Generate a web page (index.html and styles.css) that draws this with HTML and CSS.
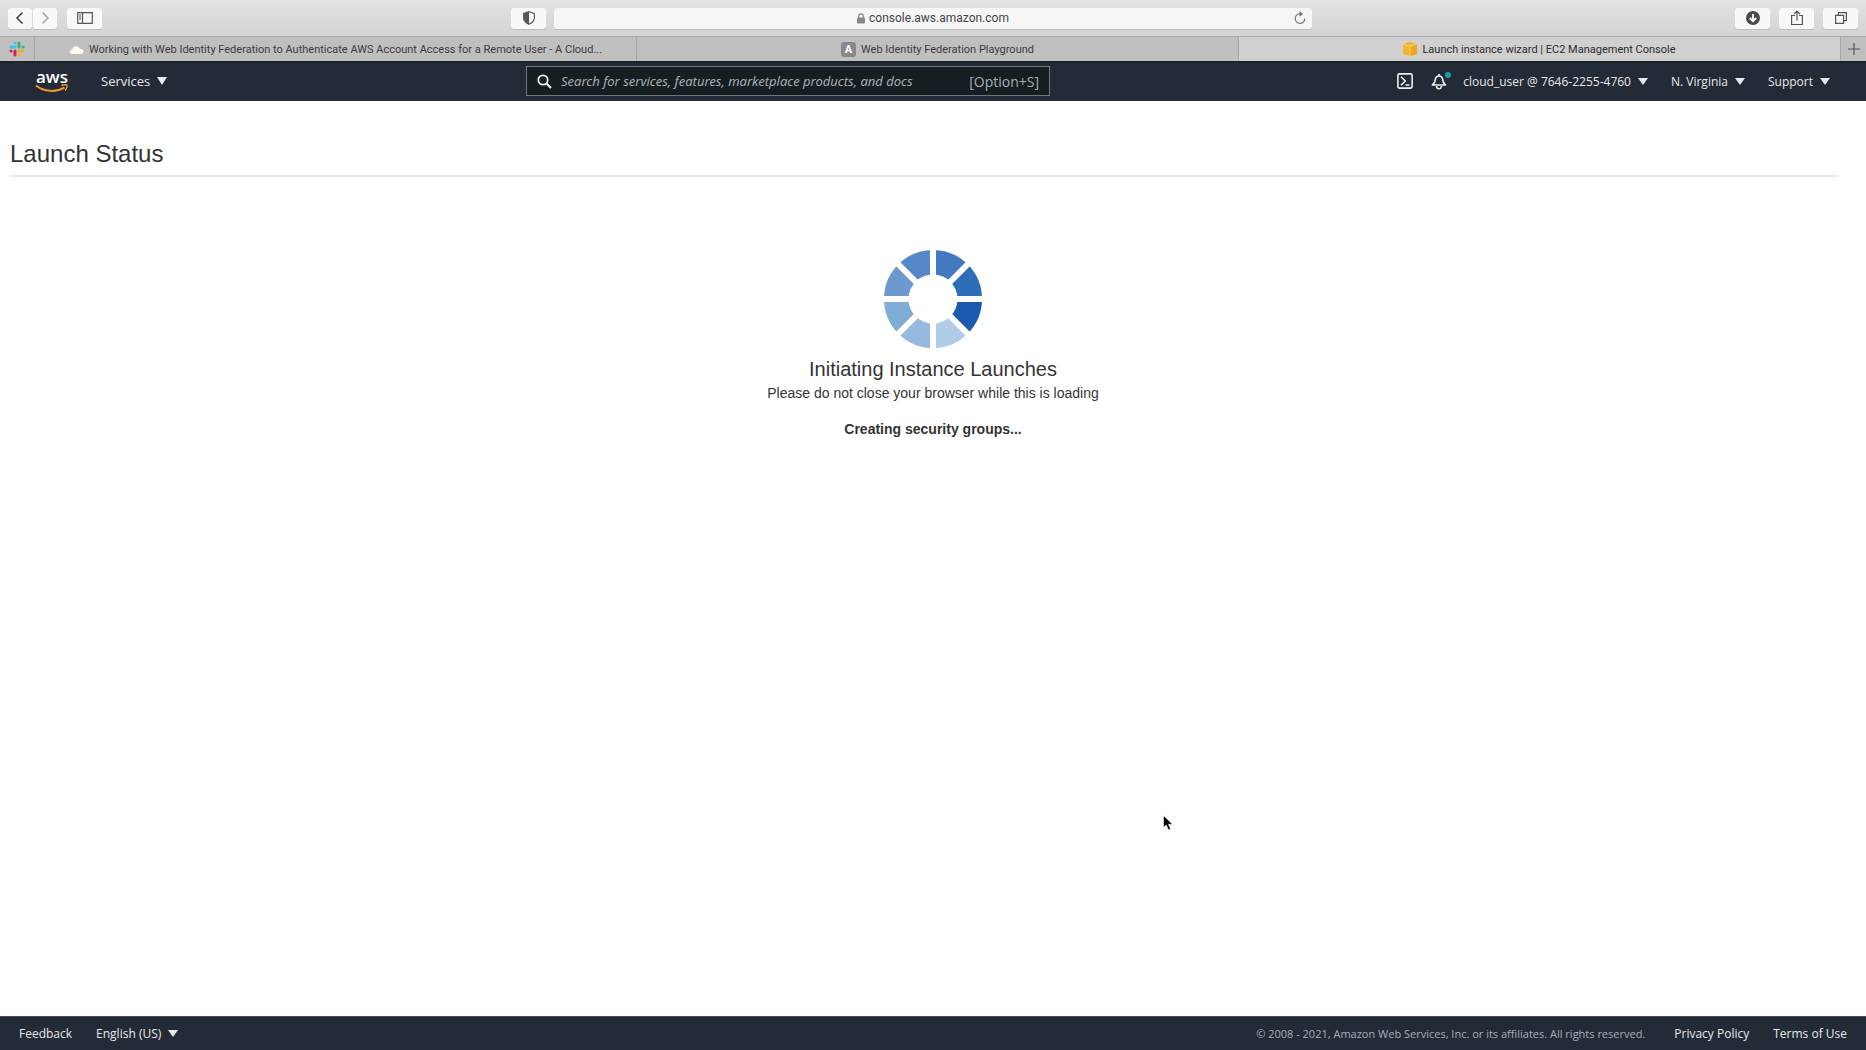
FILE: index.html
```html
<!DOCTYPE html>
<html lang="en">
<head>
<meta charset="utf-8">
<title>Launch instance wizard | EC2 Management Console</title>
<link rel="stylesheet" href="styles.css">
</head>
<body>
<div class="window">
  <div class="toolbar">
    <div class="toolbar-left">
      <div class="history">
        <button class="tool tool-small" aria-label="Back"><svg width="10" height="14" viewBox="0 0 10 14"><path d="M7.500 1.500 2 7l5.500 5.500" fill="none" stroke="#3c3c3c" stroke-width="1.500"/></svg></button>
        <button class="tool tool-small" aria-label="Forward"><svg width="10" height="14" viewBox="0 0 10 14"><path d="M2.500 1.500 8 7l-5.500 5.500" fill="none" stroke="#a4a4a4" stroke-width="1.500"/></svg></button>
      </div>
      <button class="tool" aria-label="Show sidebar"><svg width="16" height="12" viewBox="0 0 16 12"><path d="M.700.700h14.600v10.600H.700zM5.500.700v10.600M2 3h2M2 5h2M2 7h2" fill="none" stroke="#555" stroke-width="1.200"/></svg></button>
      <button class="tool shield" aria-label="Privacy report"><svg width="14" height="14" viewBox="0 0 14 14"><path d="M7 .700 12.300 2.400V7c0 3-2.400 5-5.300 6.300C4.100 12 1.700 10 1.700 7V2.400z" fill="none" stroke="#555" stroke-width="1.200"/><path d="M7 .700v12.600C4.100 12 1.700 10 1.700 7V2.400z" fill="#555"/></svg></button>
    </div>
    <div class="address">
      <span class="url"><svg width="8" height="11" viewBox="0 0 8 11"><path d="M1.700 5V3.200a2.300 2.300 0 0 1 4.600 0V5" fill="none" stroke="#888" stroke-width="1.200"/><rect y="4.500" width="8" height="6" rx="1" fill="#888"/></svg>console.aws.amazon.com</span>
      <button class="reload" aria-label="Reload"><svg width="12" height="14" viewBox="0 0 12 14"><path d="M6.500 2.800A4.800 4.800 0 1 0 10.800 7.500" fill="none" stroke="#777" stroke-width="1.200"/><path d="M5.500 0 9.200 2.900 5.500 5.800z" fill="#777"/></svg></button>
    </div>
    <div class="toolbar-right">
      <button class="tool" aria-label="Downloads"><svg width="14" height="14" viewBox="0 0 14 14"><circle cx="7" cy="7" r="7" fill="#4a4a4a"/><path d="M7 3v7M3.800 7 7 10.200 10.200 7" fill="none" stroke="#fff" stroke-width="1.800"/></svg></button>
      <button class="tool" aria-label="Share"><svg width="12" height="16" viewBox="0 0 12 16"><path d="M4 5.500H.600v9h10.800v-9H8M6 10.500V1.200M3.200 4 6 1.200 8.800 4" fill="none" stroke="#555" stroke-width="1.200"/></svg></button>
      <button class="tool" aria-label="Show all tabs"><svg width="12" height="12" viewBox="0 0 12 12"><path d="M.600 3.400h8v8h-8zM3.400 3.400V.600h8v8H8.600" fill="none" stroke="#555" stroke-width="1.200"/></svg></button>
    </div>
  </div>

  <div class="tabs">
    <a class="pinned" href="#" aria-label="Slack"><svg width="16" height="16" viewBox="0 0 16 16"><g stroke-width="3" stroke-linecap="round"><path d="M6 2v.100M2 6h4" stroke="#36c5f0"/><path d="M10 2v4M14 6h.100" stroke="#2eb67d"/><path d="M10 10h4M10 14h.100" stroke="#ecb22e"/><path d="M6 10v4M2 10h.100" stroke="#e01e5a"/></g></svg></a>
    <a class="tab" href="#"><svg width="15" height="9" viewBox="0 0 15 9"><path d="M2.500 9a2.300 2.300 0 0 1 .800-4.500A4 4 0 0 1 11 4a2.600 2.600 0 0 1 1.500 5z" fill="#fffaf2"/><path d="M1 7.500a2.300 2.300 0 0 1 2.300-3A4 4 0 0 1 6 1" fill="none" stroke="#f5cdb0"/></svg><span>Working with Web Identity Federation to Authenticate AWS Account Access for a Remote User - A Cloud...</span></a>
    <a class="tab" href="#"><span class="letter-icon">A</span><span>Web Identity Federation Playground</span></a>
    <a class="tab active" href="#"><svg width="14" height="14" viewBox="0 0 14 14"><path d="M7 0 14 2v10l-7 2-7-2V2z" fill="#f2b632"/><path d="M7 5v9l7-2V2z" fill="#e9a820"/><path d="M0 2l7 2.500L14 2M7 4.500V14" fill="none" stroke="#f8cf6c"/></svg><span>Launch instance wizard | EC2 Management Console</span></a>
    <button class="new-tab" aria-label="New tab"><svg width="12" height="12" viewBox="0 0 12 12"><path d="M6 0v12M0 6h12" stroke="#555" stroke-width="1.200"/></svg></button>
  </div>

  <header class="nav">
    <div class="nav-left">
      <a class="logo" href="#" aria-label="AWS home"><span>aws</span><svg width="34" height="9" viewBox="0 0 34 9"><path d="M1 1.500C9 8 21 8.500 29.500 3.600" fill="none" stroke="#f0982f" stroke-width="2"/><path d="M26.500 1.500c2-.900 5-1 5.500-.300.500.900-.400 3.800-2 5.200" fill="none" stroke="#f0982f" stroke-width="1.400"/></svg></a>
      <button class="menu services">Services <i class="caret"></i></button>
    </div>
    <label class="search">
      <svg width="15" height="15" viewBox="0 0 15 15"><circle cx="6" cy="6" r="4.700" fill="none" stroke="#eee" stroke-width="1.800"/><path d="m9.500 9.500 4.500 4.500" stroke="#eee" stroke-width="2.200"/></svg>
      <input type="text" aria-label="Search" placeholder="Search for services, features, marketplace products, and docs">
      <span>[Option+S]</span>
    </label>
    <div class="nav-right">
      <div class="nav-icons">
        <button aria-label="CloudShell"><svg width="16" height="16" viewBox="0 0 16 16"><rect x=".900" y=".900" width="14.200" height="14.200" rx="1.500" fill="none" stroke="#eee" stroke-width="1.600"/><path d="M4 3.800 8.200 8 4 12.200M8.500 12h4" fill="none" stroke="#eee" stroke-width="1.600"/></svg></button>
        <button aria-label="Notifications"><svg width="20" height="19" viewBox="0 0 20 19"><path d="M1.500 13c2-1.500 2.500-2.500 2.700-5C4.500 5.500 6 4 8 4s3.500 1.500 3.800 4c.200 2.500.700 3.500 2.700 5zM8 4V2" fill="none" stroke="#eee" stroke-width="1.700" stroke-linejoin="round"/><path d="M5.500 14a2.500 2.800 0 0 0 5 0" fill="none" stroke="#eee" stroke-width="1.600"/><circle cx="17" cy="3" r="3" fill="#17a2a2"/></svg></button>
      </div>
      <button class="menu">cloud_user @ 7646-2255-4760 <i class="caret small"></i></button>
      <button class="menu">N. Virginia <i class="caret small"></i></button>
      <button class="menu">Support <i class="caret small"></i></button>
    </div>
  </header>

  <main>
    <h1>Launch Status</h1>
    <section class="progress" aria-live="polite">
      <svg class="spinner" width="98" height="98" viewBox="-49 -49 98 98">
        <path d="M0 0V-49A49 49 0 0 1 34.650-34.650z" fill="#4279c0"/>
        <path d="M0 0 34.650-34.650A49 49 0 0 1 49 0z" fill="#2e6eb8"/>
        <path d="M0 0H49A49 49 0 0 1 34.650 34.650z" fill="#1a5aae"/>
        <path d="M0 0 34.650 34.650A49 49 0 0 1 0 49z" fill="#b0cce6"/>
        <path d="M0 0V49A49 49 0 0 1-34.650 34.650z" fill="#98b9df"/>
        <path d="M0 0-34.650 34.650A49 49 0 0 1-49 0z" fill="#80add5"/>
        <path d="M0 0H-49A49 49 0 0 1-34.650-34.650z" fill="#6c9ace"/>
        <path d="M0 0-34.650-34.650A49 49 0 0 1 0-49z" fill="#5688c8"/>
        <path d="M0-50V50M-50 0H50M-36-36 36 36M36-36-36 36" stroke="#fff" stroke-width="6"/>
        <circle r="24.500" fill="#fff"/>
      </svg>
      <h2>Initiating Instance Launches</h2>
      <p>Please do not close your browser while this is loading</p>
      <p class="step">Creating security groups...</p>
    </section>
  </main>

  <footer>
    <a href="#">Feedback</a>
    <button class="menu">English (US) <i class="caret small"></i></button>
    <span class="copyright">© 2008 - 2021, Amazon Web Services, Inc. or its affiliates. All rights reserved.</span>
    <a href="#">Privacy Policy</a>
    <a href="#">Terms of Use</a>
  </footer>
</div>
<svg class="pointer" width="10" height="16" viewBox="0 0 10 16"><path d="M.500.500v12l2.800-2.500 2 5 2.200-.900-2-4.800h4z" fill="#000" stroke="#fff" stroke-width=".600"/></svg>
</body>
</html>
```

FILE: styles.css
```css
* { box-sizing: border-box; }
body { margin: 0; font-family: "Liberation Sans", Arial, sans-serif; color: #333; background: #fff; }
button { border: 0; padding: 0; margin: 0; background: none; font: inherit; color: inherit; }
a { color: inherit; text-decoration: none; }
svg { display: block; flex: none; }
.window { min-height: 100vh; display: flex; flex-direction: column; }

/* Browser toolbar */
.toolbar { height: 36px; display: grid; grid-template-columns: 1fr 758px 1fr; align-items: center; background: linear-gradient(#e3e3e3, #d3d3d3); font-family: Roboto, sans-serif; }
.toolbar-left, .toolbar-right { display: flex; align-items: center; padding: 0 8px; }
.toolbar-right { justify-content: flex-end; gap: 9px; }
.history { display: flex; gap: 1px; margin-right: 10px; }
.tool { width: 35px; height: 21px; display: flex; align-items: center; justify-content: center; background: #f8f8f8; border-radius: 3px; box-shadow: 0 1px 0 #bdbdbd; }
.tool-small { width: 24px; }
.shield { margin-left: auto; }
.address { height: 21px; display: flex; align-items: center; background: #f6f6f6; border-radius: 3px; box-shadow: 0 1px 0 #bdbdbd; padding-right: 6px; }
.url { flex: 1; display: flex; justify-content: center; align-items: center; gap: 4px; font-size: 12px; color: #444; padding-left: 18px; }

/* Tab strip */
.tabs { height: 25px; display: flex; background: #bfbfc0; border-top: 1px solid #aeaeae; font-family: Roboto, sans-serif; font-size: 11px; color: #3c3c3c; }
.pinned { width: 35px; display: flex; align-items: center; justify-content: center; border-right: 1px solid #a8a8a8; }
.tab { flex: 1 1 0; min-width: 0; display: flex; align-items: center; justify-content: center; gap: 5px; padding: 0 24px; border-right: 1px solid #a8a8a8; white-space: nowrap; }
.active { background: #d0d0d0; color: #2c2c2c; }
.letter-icon { width: 15px; height: 15px; border-radius: 3px; background: #88888c; color: #fff; font-weight: 700; line-height: 15px; text-align: center; }
.new-tab { width: 25px; display: flex; align-items: center; justify-content: center; }

/* Console navigation */
.nav { height: 40px; display: grid; grid-template-columns: 526fr 524fr 816fr; align-items: center; background: #232b37; box-shadow: inset 0 2px 0 #1b222b; color: #e8e8e8; font-family: "Open Sans", sans-serif; font-size: 12px; }
.nav-left, .nav-right, .nav-icons { display: flex; align-items: center; }
.nav-left { padding-left: 35px; gap: 32px; }
.nav-right { justify-content: flex-end; padding-right: 36px; gap: 23px; }
.nav-icons { gap: 18px; margin-right: -11px; }
.logo { display: flex; flex-direction: column; align-items: center; color: #fff; font-size: 17px; font-weight: 600; line-height: 14px; }
.menu { display: flex; align-items: center; gap: 7px; white-space: nowrap; }
.services { font-size: 13px; }
.caret { border: 5px solid transparent; border-top: 8px solid currentColor; border-bottom: 0; }
.small { border-top-width: 7px; }
.search { height: 30px; display: flex; align-items: center; gap: 9px; padding: 0 10px; background: #161e22; border: 1px solid #6d777d; color: #a8adb0; font-size: 14px; }
.search input { flex: 1; min-width: 0; border: 0; padding: 0; outline: 0; background: none; font: italic 13px "Noto Sans", sans-serif; color: #a8adb0; }
.search input::placeholder { color: #a8adb0; opacity: 1; }

/* Launch status */
main { flex: 1; padding: 37px 28px 0 10px; }
h1 { margin: 0; padding-bottom: 5px; border-bottom: 2px solid #e9e9e9; font-size: 24px; line-height: 32px; font-weight: 400; }
.progress { display: flex; flex-direction: column; align-items: center; margin-right: -18px; padding-top: 73px; text-align: center; }
h2 { margin: 9px 0 0; font-size: 20px; line-height: 24px; font-weight: 400; }
p { margin: 4px 0 0; font-size: 14px; line-height: 16px; }
.step { margin-top: 20px; font-weight: 700; }

footer { height: 34px; display: flex; align-items: center; gap: 24px; padding: 0 19px; background: #232b37; border-top: 1px solid #434a54; color: #e8e8e8; font-family: "Open Sans", sans-serif; font-size: 12px; }
.copyright { margin-left: auto; margin-right: 5px; color: #a9aeb5; font-size: 11px; }
.pointer { position: absolute; left: 62.300%; top: 815px; }
```
